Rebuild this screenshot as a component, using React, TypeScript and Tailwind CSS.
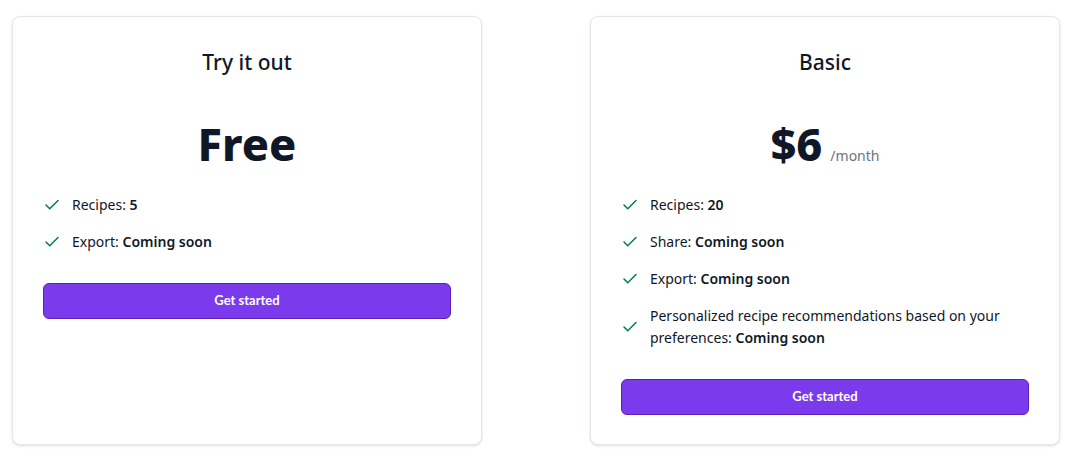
import { Check } from "lucide-react";

type Feature = { label: string; value: string };

const PLANS: { name: string; price: string; period?: string; features: Feature[] }[] = [
  {
    name: "Try it out",
    price: "Free",
    features: [
      { label: "Recipes:", value: "5" },
      { label: "Export:", value: "Coming soon" },
    ],
  },
  {
    name: "Basic",
    price: "$6",
    period: "/month",
    features: [
      { label: "Recipes:", value: "20" },
      { label: "Share:", value: "Coming soon" },
      { label: "Export:", value: "Coming soon" },
      {
        label: "Personalized recipe recommendations based on your preferences:",
        value: "Coming soon",
      },
    ],
  },
];

function PlanCard({ plan }: { plan: (typeof PLANS)[number] }) {
  return (
    <div className="bg-white border border-gray-200 rounded-lg shadow-sm px-[30px] pt-[31px] pb-[29px] flex flex-col">
      <h3 className="text-center text-[21px] leading-7 font-medium text-gray-900">{plan.name}</h3>
      <div className="mt-[44px] flex items-baseline justify-center gap-2">
        <span className="text-[45px] leading-[48px] font-extrabold text-gray-900">{plan.price}</span>
        {plan.period && <span className="text-sm text-gray-500">{plan.period}</span>}
      </div>
      <ul className="mt-[26px] flex flex-col gap-[15px]">
        {plan.features.map((f) => (
          <li key={f.label} className="flex items-center gap-[11px]">
            <Check size={18} strokeWidth={2} className="text-emerald-700 flex-shrink-0" />
            <span className="text-[14px] leading-[22px] text-gray-900">
              {f.label} <span className="font-semibold">{f.value}</span>
            </span>
          </li>
        ))}
      </ul>
      <button className="mt-[30px] h-9 w-full rounded-md bg-[#7c3aed] border border-[#5b21b6] text-white text-[13px] font-bold font-['Lato',sans-serif]">
        Get started
      </button>
    </div>
  );
}

export default function App() {
  return (
    <div className="bg-white min-h-screen pt-4 pl-3 pr-[10px] font-['Noto_Sans',sans-serif]">
      <div className="grid grid-cols-2 gap-[108px] items-stretch">
        {PLANS.map((p) => (
          <PlanCard key={p.name} plan={p} />
        ))}
      </div>
    </div>
  );
}
